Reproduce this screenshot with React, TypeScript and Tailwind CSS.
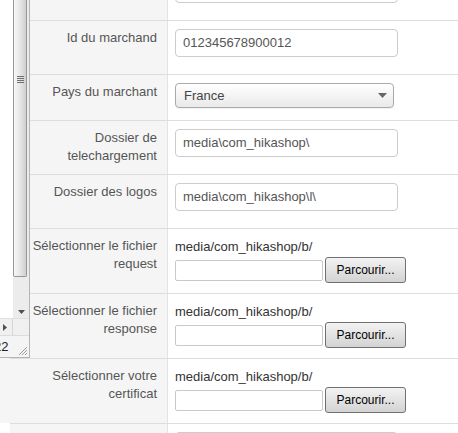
import React from "react";

type Row =
  | { kind: "input"; label: string; value: string }
  | { kind: "select"; label: string; value: string }
  | { kind: "file"; label: string; path: string };

const rows: Row[] = [
  { kind: "input", label: "", value: "" },
  { kind: "input", label: "Id du marchand", value: "012345678900012" },
  { kind: "select", label: "Pays du marchant", value: "France" },
  { kind: "input", label: "Dossier de telechargement", value: "media\\com_hikashop\\" },
  { kind: "input", label: "Dossier des logos", value: "media\\com_hikashop\\l\\" },
  { kind: "file", label: "Sélectionner le fichier request", path: "media/com_hikashop/b/" },
  { kind: "file", label: "Sélectionner le fichier response", path: "media/com_hikashop/b/" },
  { kind: "file", label: "Sélectionner votre certificat", path: "media/com_hikashop/b/" },
  { kind: "input", label: "", value: "" },
];

function FormRow({ row }: { row: Row }) {
  const h =
    row.kind === "select" ? "h-[46px]" : row.kind === "file" ? "h-[65px]" : "h-[54px]";
  return (
    <div className={`flex ${h} border-t border-[#dddddd]`}>
      <div className="w-[158px] shrink-0 bg-[#f5f5f5] border-r border-[#e3e3e3] pl-[10px] pr-[10px] pt-[8px] text-right leading-[18px] text-[#555555]">
        {row.label}
      </div>
      <div className="flex-1 pl-[7px] pt-[8px]">
        {row.kind === "input" && (
          <div className="flex h-[28px] w-[223px] items-center rounded-[4px] border border-[#cccccc] bg-white pl-[7px] text-[#555555]">
            {row.value}
          </div>
        )}
        {row.kind === "select" && (
          <div className="flex h-[25px] w-[219px] items-center justify-between rounded-[4px] border border-[#aaaaaa] bg-gradient-to-b from-white to-[#e9e9e9] pl-[8px] pr-[6px] text-[#444444] shadow-[0_1px_1px_rgba(0,0,0,0.06)]">
            <span>{row.value}</span>
            <svg width="9" height="5" viewBox="0 0 9 5">
              <path d="M0 0 L9 0 L4.5 5 Z" fill="#666666" />
            </svg>
          </div>
        )}
        {row.kind === "file" && (
          <div className="flex flex-col">
            <div className="leading-[18px] text-[#333333] pt-[1px]">{row.path}</div>
            <div className="mt-[1px] flex items-center gap-[2px]">
              <div className="h-[21px] w-[148px] rounded-[2px] border border-[#c9c9c9] bg-white" />
              <div className="flex h-[26px] w-[81px] items-center justify-center rounded-[3px] border border-[#707070] bg-gradient-to-b from-[#f3f3f3] to-[#d3d3d3] text-[12px] text-black">
                Parcourir...
              </div>
            </div>
          </div>
        )}
      </div>
    </div>
  );
}

function TextareaOverlay() {
  return (
    <div className="absolute left-0 top-0 flex flex-col">
      <div className="flex h-[358px] w-[30px] flex-col border-r border-b border-[#b5b5b5] bg-white">
        <div className="flex h-[318px]">
          <div className="w-[13px] bg-white" />
          <div className="flex w-[16px] flex-col bg-[#ececec]">
            <div className="flex h-[277px] w-[14px] items-start justify-center border-l border-r border-b border-[#979797] rounded-b-[2px] bg-gradient-to-r from-[#f7f7f7] via-[#e6e6e6] to-[#cfcfcf] pt-[76px]">
              <div className="flex flex-col gap-[1px]">
                <div className="h-[1px] w-[7px] bg-[#6f6f6f]" />
                <div className="h-[1px] w-[7px] bg-[#6f6f6f]" />
                <div className="h-[1px] w-[7px] bg-[#6f6f6f]" />
                <div className="h-[1px] w-[7px] bg-[#6f6f6f]" />
              </div>
            </div>
            <div className="flex flex-1 items-end justify-center pb-[4px] pl-[1px]">
              <svg width="7" height="4" viewBox="0 0 7 4">
                <path d="M0 0 L7 0 L3.5 4 Z" fill="#505050" />
              </svg>
            </div>
          </div>
        </div>
        <div className="flex h-[17px] border-t border-[#e0e0e0]">
          <div className="flex w-[13px] items-center bg-[#f0f0f0] pl-[3px] border-r border-[#d6d6d6]">
            <svg width="4" height="7" viewBox="0 0 4 7">
              <path d="M0 0 L4 3.5 L0 7 Z" fill="#505050" />
            </svg>
          </div>
          <div className="flex-1 bg-[#f0f0f0]" />
        </div>
        <div className="flex flex-1 items-end justify-between overflow-hidden border-t border-[#dcdcdc] bg-[#f4f4f4]">
          <span className="ml-[-6px] mb-[1px] text-[13px] leading-[18px] text-[#222222]">22</span>
          <svg width="10" height="10" viewBox="0 0 10 10" className="mb-[1px] mr-[1px]">
            <path d="M9 1 L1 9 M9 4 L4 9 M9 7 L7 9" stroke="#9a9a9a" strokeWidth="1" />
          </svg>
        </div>
      </div>
      <div className="h-[65px] w-[10px] bg-[#f5f5f5]" />
    </div>
  );
}

export default function App() {
  return (
    <div className="relative h-[433px] w-[458px] overflow-hidden bg-white font-['Liberation_Sans',Arial,sans-serif] text-[13px]">
      <div className="ml-[10px] mt-[-34px]">
        {rows.map((r, i) => (
          <FormRow key={i} row={r} />
        ))}
      </div>
      <TextareaOverlay />
    </div>
  );
}
